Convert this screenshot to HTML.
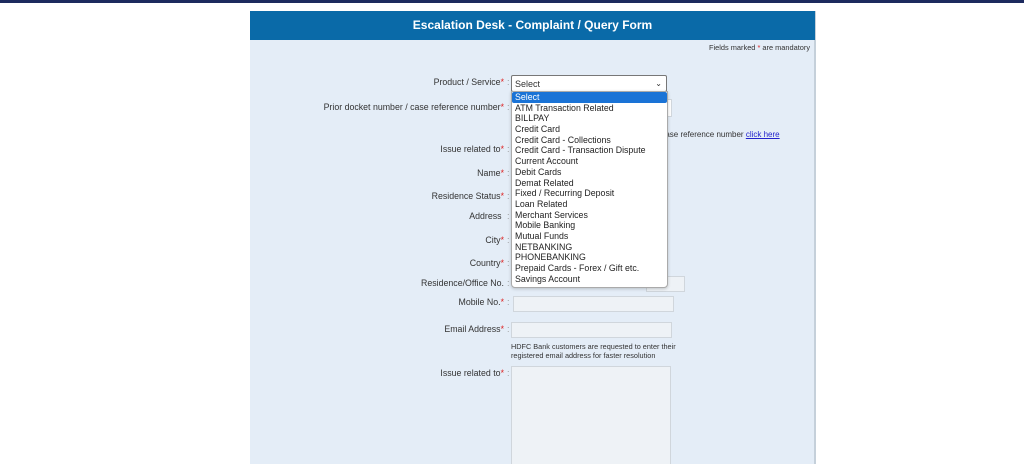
<!DOCTYPE html>
<html style="height:464px;overflow:hidden"><head><style>
body{margin:0;width:1024px;height:464px;background:#fff;font-family:"Liberation Sans",Arial,sans-serif;position:relative;overflow:hidden;color:#333}
.top{position:absolute;left:0;top:0;width:1024px;height:3px;background:#1c2a5e}
.panel{position:absolute;left:250px;top:11px;width:564px;height:453px;background:#e4edf7;border-right:2px solid #c5d0da}
.hd{position:absolute;left:250px;top:11px;width:565px;height:29px;background:#0a6aa8;color:#fff;font-weight:bold;font-size:12px;text-align:center;line-height:29px}
.a{position:absolute;font-size:8.5px;white-space:nowrap}
.l{position:absolute;font-size:8.8px;text-align:right;right:520px;white-space:nowrap}
.l i{color:#d22;font-style:normal}
.c{position:absolute;left:507px;font-size:9px;color:#999}
.in{position:absolute;background:#eef2f6;border:1px solid #d0d6dc}
.sel{position:absolute;left:511px;top:75px;height:17px;background:#fff;border:1px solid #777;border-radius:2px;font-size:9px;line-height:16px;padding-left:3px;box-sizing:border-box;width:156px}
.dd{position:absolute;left:511px;top:91px;width:155px;height:195px;background:#fff;border:1px solid #aaa;border-radius:0 0 4px 4px;font-size:8.8px;box-shadow:0 1px 3px rgba(0,0,0,.2)}
.dd div{height:10.7px;line-height:10.7px;padding-left:3px;color:#222}
.dd .s{background:#1a73d6;color:#fff;border-radius:2px}
</style></head><body>
<div class="top"></div>
<div class="panel"></div>
<div class="hd">Escalation Desk - Complaint / Query Form</div>
<div class="a" style="left:709px;top:43px;font-size:7.4px">Fields marked <span style="color:#d22">*</span> are mandatory</div>
<div class="l" style="top:77px">Product / Service<i>*</i></div><div class="c" style="top:77px">:</div>
<div class="l" style="top:102px">Prior docket number / case reference number<i>*</i></div><div class="c" style="top:102px">:</div>
<div class="in" style="left:660px;top:99px;width:10px;height:16px;background:#fff"></div>
<div class="a" style="left:652px;top:130px;font-size:8px">r / case reference number <span style="color:#22c;text-decoration:underline">click here</span></div>
<div class="l" style="top:144px">Issue related to<i>*</i></div><div class="c" style="top:144px">:</div>
<div class="l" style="top:168px">Name<i>*</i></div><div class="c" style="top:168px">:</div>
<div class="l" style="top:191px">Residence Status<i>*</i></div><div class="c" style="top:191px">:</div>
<div class="l" style="top:211px">Address&nbsp;</div><div class="c" style="top:211px">:</div>
<div class="l" style="top:235px">City<i>*</i></div><div class="c" style="top:235px">:</div>
<div class="l" style="top:258px">Country<i>*</i></div><div class="c" style="top:258px">:</div>
<div class="l" style="top:278px">Residence/Office No.</div><div class="c" style="top:278px">:</div>
<div class="in" style="left:646px;top:276px;width:37px;height:14px"></div>
<div class="l" style="top:297px">Mobile No.<i>*</i></div><div class="c" style="top:297px">:</div>
<div class="in" style="left:513px;top:296px;width:159px;height:14px"></div>
<div class="l" style="top:324px">Email Address<i>*</i></div><div class="c" style="top:324px">:</div>
<div class="in" style="left:511px;top:322px;width:159px;height:14px"></div>
<div class="a" style="left:511px;top:342px;font-size:7.3px;line-height:9px">HDFC Bank customers are requested to enter their<br>registered email address for faster resolution</div>
<div class="l" style="top:368px">Issue related to<i>*</i></div><div class="c" style="top:368px">:</div>
<div class="in" style="left:511px;top:366px;width:158px;height:100px"></div>
<div class="sel">Select<span style="position:absolute;right:4px;top:0;font-size:8px">&#8964;</span></div>
<div class="dd">
<div class="s">Select</div><div>ATM Transaction Related</div><div>BILLPAY</div><div>Credit Card</div><div>Credit Card - Collections</div><div>Credit Card - Transaction Dispute</div><div>Current Account</div><div>Debit Cards</div><div>Demat Related</div><div>Fixed / Recurring Deposit</div><div>Loan Related</div><div>Merchant Services</div><div>Mobile Banking</div><div>Mutual Funds</div><div>NETBANKING</div><div>PHONEBANKING</div><div>Prepaid Cards - Forex / Gift etc.</div><div>Savings Account</div>
</div>
</body></html>
